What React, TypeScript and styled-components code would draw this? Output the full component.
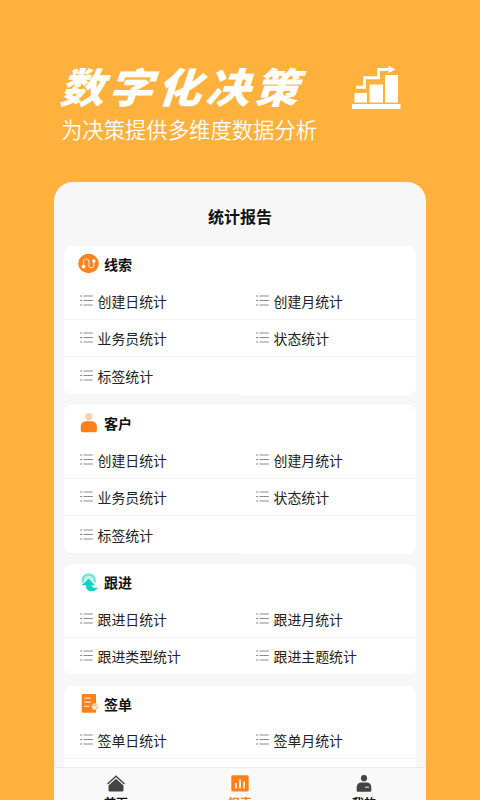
import styled, { createGlobalStyle } from "styled-components";

const GlobalStyle = createGlobalStyle`
  * {
    box-sizing: border-box;
  }

  body {
    margin: 0;
    overflow: hidden;
    background: #ffb13d;
    font-family: "Noto Sans CJK SC", sans-serif;
  }
`;

interface Section {
  title: string;
  icon: () => React.JSX.Element;
  items: string[];
}

const sections: Section[] = [
  {
    title: "线索",
    icon: ClueIcon,
    items: ["创建日统计", "创建月统计", "业务员统计", "状态统计", "标签统计"],
  },
  {
    title: "客户",
    icon: CustomerIcon,
    items: ["创建日统计", "创建月统计", "业务员统计", "状态统计", "标签统计"],
  },
  {
    title: "跟进",
    icon: FollowIcon,
    items: ["跟进日统计", "跟进月统计", "跟进类型统计", "跟进主题统计"],
  },
  {
    title: "签单",
    icon: SignIcon,
    items: ["签单日统计", "签单月统计"],
  },
];

const tabs = [
  { label: "首页", icon: HomeIcon, active: false },
  { label: "报表", icon: ReportIcon, active: true },
  { label: "我的", icon: MineIcon, active: false },
];

function GrowthIcon() {
  return (
    <svg width="50" height="46" viewBox="0 0 50 46" fill="#fff">
      <path d="M0 39h48.500v5H0zM2.500 28H15v9.500H2.500zM17.500 19.500h13.500v18H17.500zM33 10h13v27.500H33z" />
      <path d="M4 22.300h8.500v-9.500h14V4.500h10" fill="none" stroke="#fff" strokeWidth="3" />
      <path d="M36.500.8l7 3.700-7 3.700z" />
    </svg>
  );
}

function ClueIcon() {
  return (
    <svg width="22" height="22" viewBox="0 0 22 22">
      <ellipse cx="10.500" cy="10.500" rx="10.300" ry="9.700" fill="#ff8220" />
      <path
        d="M5.500 13V8.800a2.700 2.700 0 0 1 5.400 0v3.500a2.500 2.500 0 0 0 5 0V8.500"
        fill="none"
        stroke="#ffd3ad"
        strokeWidth="1.300"
      />
      <circle cx="5.600" cy="13.600" r="1.900" fill="#fff" />
      <circle cx="15.900" cy="8" r="1.700" fill="#fff" />
    </svg>
  );
}

function CustomerIcon() {
  return (
    <svg width="22" height="22" viewBox="0 0 22 22">
      <circle cx="10.800" cy="4.800" r="3.700" fill="#ffd2ae" />
      <path d="M2.700 18.500V14.500a5 5 0 0 1 5-5.200h6.200a5 5 0 0 1 5 5.200v4q0 1.700-1.500 1.700H4.200q-1.500 0-1.500-1.700z" fill="#ff8018" />
    </svg>
  );
}

function FollowIcon() {
  return (
    <svg width="22" height="22" viewBox="0 0 22 22">
      <path d="M5 11.500a6 6 0 1 1 11.400 0" fill="none" stroke="#74e7dc" strokeWidth="2.800" />
      <circle cx="10.700" cy="8" r="2.800" fill="#b5f2ec" />
      <path
        d="M10.700 7.800l6.300 6.400h-3.300c.3 2.700 3.200 3.500 6.300 2.100-1.800 3.400-5.500 4.700-8.600 3.600-2.700-1-3.500-3.200-3.300-5.700H3.500z"
        fill="#06d3c3"
      />
    </svg>
  );
}

function SignIcon() {
  return (
    <svg width="22" height="22" viewBox="0 0 22 22">
      <rect x="3.700" y="1" width="14.300" height="18.700" rx="1" fill="#ff8018" />
      <path d="M6.300 5.200h6.500M6.300 9.200h6.500M6.300 13.300h5" stroke="#ffe5cf" strokeWidth="1.300" />
      <circle cx="17" cy="13.500" r="3.500" fill="#ffc799" />
      <path d="M14.800 13.500l1.700 1.600 3-3" fill="none" stroke="#fff" strokeWidth="1.200" />
    </svg>
  );
}

function ListIcon() {
  return (
    <svg width="13" height="12" viewBox="0 0 13 12" stroke="#8b8b8b" strokeWidth="1.200">
      <path d="M0 1h2M3.500 1h9.300M0 5.500h2M3.500 5.500h9.300M0 10h2M3.500 10h9.300" />
    </svg>
  );
}

function HomeIcon() {
  return (
    <svg width="20" height="18" viewBox="0 0 20 18">
      <path d="M1.500 9L10 1.200 18.500 9" fill="none" stroke="#444" strokeWidth="1.400" />
      <path d="M10 3.800l7.500 6.800v4.600q0 1.300-1.300 1.300H3.800q-1.300 0-1.300-1.300v-4.600z" fill="#444" />
    </svg>
  );
}

function ReportIcon() {
  return (
    <svg width="20" height="18" viewBox="0 0 20 18">
      <rect x="1.300" y=".3" width="17.400" height="16.300" rx="1.500" fill="#ff8018" />
      <path d="M6 8v5.500M10 4.500v9M14 6.500v7" stroke="#fff" strokeWidth="1.600" />
    </svg>
  );
}

function MineIcon() {
  return (
    <svg width="20" height="18" viewBox="0 0 20 18" fill="#444">
      <circle cx="10" cy="3.200" r="3.100" />
      <path d="M2.700 15.800V12a4.500 4.500 0 0 1 4.500-4.500h5.600a4.500 4.500 0 0 1 4.500 4.500v3.800q0 1-1 1H3.700q-1 0-1-1z" />
      <path d="M11 12.200h4" stroke="#ddd" strokeWidth="1.100" />
    </svg>
  );
}

function ReportCard({ title, icon: Icon, items }: Section) {
  return (
    <Card>
      <CardTitle>
        <Icon />
        {title}
      </CardTitle>
      <ItemGrid>
        {items.map((item, index) => (
          <Item key={index}>
            <ListIcon />
            {item}
          </Item>
        ))}
      </ItemGrid>
    </Card>
  );
}

function App() {
  return (
    <Page>
      <GlobalStyle />
      <Hero>
        <div>
          <HeroTitle>数字化决策</HeroTitle>
          <HeroText>为决策提供多维度数据分析</HeroText>
        </div>
        <GrowthIcon />
      </Hero>
      <Phone>
        <PhoneTitle>统计报告</PhoneTitle>
        <CardList>
          {sections.map((section) => (
            <ReportCard key={section.title} {...section} />
          ))}
        </CardList>
        <TabBar>
          {tabs.map(({ label, icon: Icon, active }) => (
            <Tab key={label} $active={active}>
              <Icon />
              {label}
            </Tab>
          ))}
        </TabBar>
      </Phone>
    </Page>
  );
}

const Page = styled.div`
  display: flex;
  flex-direction: column;
  height: 800px;
  width: 480px;
  overflow: hidden;
  background: #ffb13d;
`;

const Hero = styled.header`
  display: flex;
  justify-content: space-between;
  flex-shrink: 0;
  height: 182px;
  padding: 65px 78px 0 61px;
  color: #fff;
`;

const HeroTitle = styled.h1`
  width: 240px;
  height: 49px;
  margin: 0;
  font-size: 41px;
  font-weight: 900;
  line-height: 41px;
  letter-spacing: 4px;
  white-space: nowrap;
  transform: translateX(-3px) skewX(-18deg) scaleX(1.080);
  transform-origin: -70px 50%;
`;

const HeroText = styled.p`
  margin: 0;
  font-size: 21.350px;
  font-weight: 350;
  line-height: 30px;
  white-space: nowrap;
`;

const Phone = styled.main`
  display: flex;
  flex-direction: column;
  height: 618px;
  margin: 0 54px;
  overflow: hidden;
  border-radius: 19px 19px 0 0;
  background: #f7f7f7;
`;

const PhoneTitle = styled.h2`
  flex-shrink: 0;
  height: 64px;
  margin: 0;
  padding-top: 2px;
  font-size: 16px;
  line-height: 64px;
  text-align: center;
  color: #111;
`;

const CardList = styled.div`
  display: flex;
  flex-direction: column;
  gap: 10.500px;
  height: 521px;
  padding: 0 10px;
`;

const Card = styled.section`
  flex-shrink: 0;
  overflow: hidden;
  border-radius: 8px;
  background: #fff;

  &:last-child {
    flex: 1;
    border-radius: 8px 8px 0 0;
  }
`;

const CardTitle = styled.h3`
  display: flex;
  align-items: center;
  gap: 4px;
  height: 36px;
  margin: 0;
  padding-left: 14px;
  font-size: 14px;
  color: #111;
`;

const ItemGrid = styled.div`
  display: grid;
  grid-template-columns: 176px 176px;
  grid-auto-rows: 37.500px;
`;

const Item = styled.div`
  display: flex;
  align-items: center;
  gap: 5px;
  padding: 1px 0 0 15.500px;
  border-bottom: 1px solid #f4f4f4;
  font-size: 13.900px;
  color: #222;
  white-space: nowrap;
`;

const TabBar = styled.nav`
  display: flex;
  flex-shrink: 0;
  height: 33px;
  overflow: hidden;
  border-top: 1px solid #ebebeb;
  background: #f9f9f9;
`;

const Tab = styled.div<{ $active: boolean }>`
  display: flex;
  flex: 1;
  flex-direction: column;
  align-items: center;
  padding-top: 7px;
  font-size: 12px;
  font-weight: 700;
  line-height: 19px;
  color: ${({ $active }) => ($active ? "#ff8018" : "#111")};

  svg {
    flex-shrink: 0;
  }
`;

export default App;
